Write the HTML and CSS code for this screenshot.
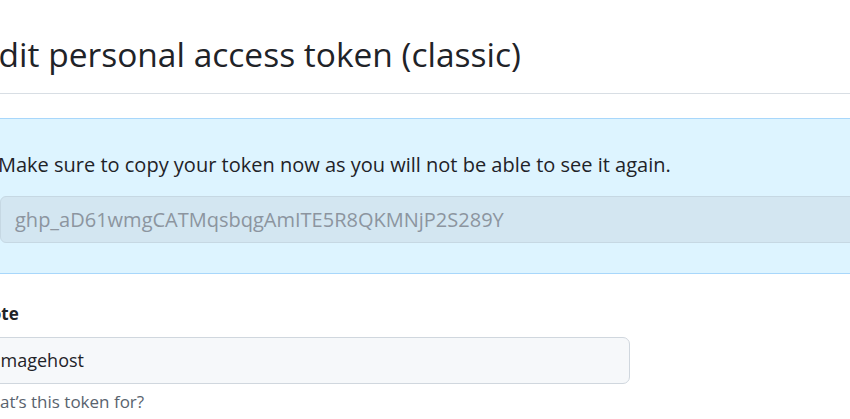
FILE: index.html
```html
<!DOCTYPE html>
<html lang="en">
<head>
<meta charset="utf-8">
<title>Edit personal access token (classic)</title>
<link rel="stylesheet" href="styles.css">
</head>
<body>
<div class="page">
  <div class="subhead">
    <h1 class="subhead-heading">Edit personal access token (classic)</h1>
  </div>
  <div class="flash">
    <p class="flash-text">Make sure to copy your token now as you will not be able to see it again.</p>
    <div class="token-box">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</div>
  </div>
  <div class="form-group">
    <label class="form-label">Note</label>
    <div class="form-input">imagehost</div>
    <p class="form-note">What’s this token for?</p>
  </div>
</div>
</body>
</html>
```
FILE: styles.css
```css
html, body {
  margin: 0;
  padding: 0;
  background: #ffffff;
  overflow: hidden;
}
body {
  font-family: "Open Sans", "Noto Sans", sans-serif;
  color: #1f2328;
}
.page {
  margin-left: -21px;
  width: 1100px;
}
.subhead {
  padding-top: 30px;
  padding-bottom: 15px;
  border-bottom: 1px solid #d8dee4;
}
.subhead-heading {
  margin: 0 0 0 1px;
  font-size: 33.5px;
  font-weight: 400;
  line-height: 48px;
}
.flash {
  margin-top: 24px;
  padding: 32px 21px 30px;
  background: #ddf4ff;
  border-top: 1px solid #a8d7fb;
  border-bottom: 1px solid #a8d7fb;
}
.flash-text {
  margin: 0 0 17px -2px;
  font-size: 20px;
  line-height: 28px;
}
.token-box {
  height: 45px;
  line-height: 45px;
  padding-left: 14px;
  background: #d3e6f1;
  border: 1px solid #c6d8e3;
  border-radius: 6px;
  font-size: 20px;
  color: #8c959f;
}
.form-group {
  padding-top: 27px;
}
.form-label {
  display: block;
  margin-left: -2px;
  font-size: 17px;
  font-weight: 700;
  line-height: 26px;
  margin-bottom: 10px;
}
.form-input {
  width: 633px;
  height: 45px;
  line-height: 45px;
  padding-left: 16px;
  background: #f6f8fa;
  border: 1px solid #d0d7de;
  border-radius: 7px;
  font-size: 18px;
  box-sizing: content-box;
}
.form-note {
  margin: 6px 0 0 -5px;
  font-size: 17px;
  line-height: 24px;
  color: #59636e;
}
```
